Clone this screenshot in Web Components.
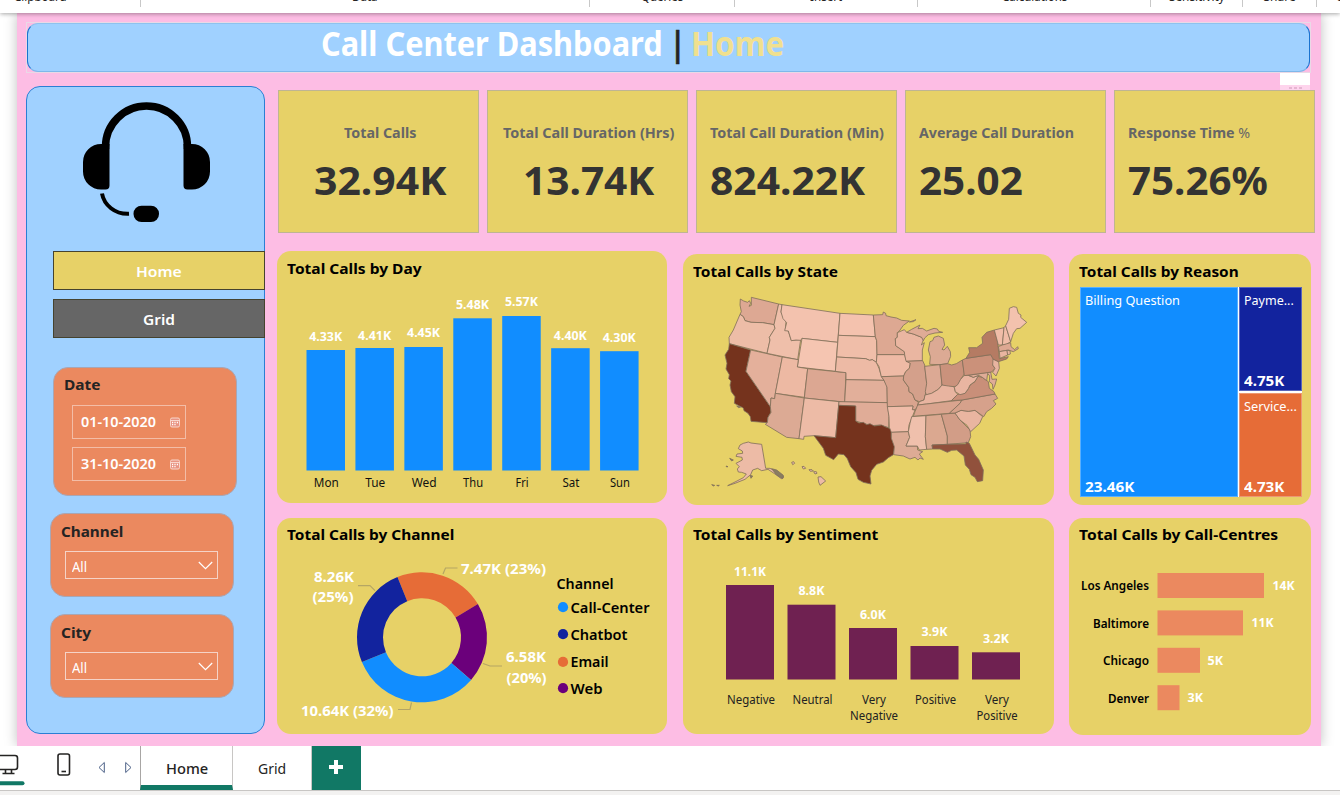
<!DOCTYPE html>
<html lang="en">
<head>
<meta charset="utf-8">
<title>Call Center Dashboard</title>
<style>
html,body{margin:0;height:100%;overflow:hidden;background:#fff;font-family:"Noto Sans","Open Sans",sans-serif}
</style>
</head>
<body>
<report-app></report-app>
<script>
const FONT = 'font-family="Noto Sans, Open Sans, sans-serif"';
const fits = [];

function define(name, html, setup) {
  customElements.define(name, class extends HTMLElement {
    connectedCallback() {
      if (this.shadowRoot) return;
      const root = this.attachShadow({ mode: 'open' });
      root.innerHTML = typeof html === 'function' ? html(this) : html;
      if (setup) setup(this, root);
    }
  });
}

// One line of SVG text set to a given width.
function label(x, y, text, width, size = 12, fill = '#fff', weight = 700, anchor = 'middle') {
  return `<text x="${x}" y="${y}" font-size="${size}" font-weight="${weight}" fill="${fill}" text-anchor="${anchor}" textLength="${width}" lengthAdjust="spacingAndGlyphs">${text}</text>`;
}
const chartStyle = '<style>:host{display:block}svg{display:block;width:100%;height:100%}</style>';

// Text line scaled horizontally to the width in its "w" attribute.
define('fit-text', '<style>:host{display:inline-block;white-space:nowrap;flex:none}span{display:inline-block;transform-origin:0 50%}</style><span><slot></slot></span>', (el, root) => {
  fits.push(() => {
    const w = +el.getAttribute('w'), span = root.querySelector('span');
    span.style.transform = `scaleX(${w / span.offsetWidth})`;
    el.style.width = w + 'px';
  });
});

define('ribbon-group', el => `<style>
:host{display:block;box-sizing:border-box;flex:none;width:${el.getAttribute('width')}px;height:7px;border-right:1px solid #c8c8c8;text-align:center;font-size:12px;line-height:16px;color:#252423}
div{margin-top:-11px}</style><div><slot></slot></div>`);

define('ribbon-bar', `<style>
:host{display:flex;height:13px;overflow:hidden;background:#fff;position:relative;z-index:3;clip-path:inset(0 0 -8px 0);box-shadow:0 1px 4px rgba(0,0,0,.35)}
nav{display:flex;width:1340px;height:13px;overflow:hidden}
ribbon-group:first-child{margin-left:-60px}</style>
<nav>
<ribbon-group width="201"><fit-text w="53">Clipboard</fit-text></ribbon-group>
<ribbon-group width="449"><fit-text w="26">Data</fit-text></ribbon-group>
<ribbon-group width="145"><fit-text w="42">Queries</fit-text></ribbon-group>
<ribbon-group width="183"><fit-text w="32">Insert</fit-text></ribbon-group>
<ribbon-group width="233"><fit-text w="65">Calculations</fit-text></ribbon-group>
<ribbon-group width="92"><fit-text w="56">Sensitivity</fit-text></ribbon-group>
<ribbon-group width="74"><fit-text w="32">Share</fit-text></ribbon-group>
<ribbon-group width="76"><fit-text w="38">Copilot</fit-text></ribbon-group>
</nav>`);

define('report-header', `<style>
:host{display:block;box-sizing:border-box;height:51px;border:1px solid #ead9e6}
div{box-sizing:border-box;height:49px;border:1px solid #1a73cf;border-top-color:#8fc2ee;border-bottom-color:#7fb8ea;border-radius:11px;background:#a0d1ff;display:flex;align-items:center;padding:0 0 10px 292.5px;font-size:33.5px;font-weight:700;line-height:38px;color:#fff}
.bar{color:#252423;margin:0 6px 0 7px;-webkit-text-stroke:.6px #252423}.page{color:#f0e08f}
.more{position:absolute;right:11px;top:60px;width:30px;height:17px;padding:0;display:block;background:rgba(255,255,255,.35);border:0;border-radius:0}
.more i{display:block;height:12px;background:#fff}.more svg{display:block}
</style><div><fit-text w="342">Call Center Dashboard</fit-text><fit-text class="bar" w="15">|</fit-text><fit-text class="page" w="93">Home</fit-text></div>
<div class="more"><i></i><svg width="30" height="5"><path d="M9 3h3M14 3h3M19 3h3" stroke="#e6b5d2" stroke-width="2"/></svg></div>`);

define('kpi-card', el => `<style>
:host{box-sizing:border-box;display:flex;flex-direction:column;align-items:${el.hasAttribute('center') ? 'center' : 'flex-start'};padding:${el.hasAttribute('center') ? '30px 0 0 3px' : '30px 0 0 13px'};height:143px;background:#e7d167;border:1px solid #bfb592}
.l{font-size:14.5px;font-weight:700;line-height:22px;color:#666}.v{font-size:40px;font-weight:700;line-height:50px;margin-top:12px;color:#333}</style>
<fit-text class="l" w="${el.getAttribute('lw')}">${el.getAttribute('label')}</fit-text>
<fit-text class="v" w="${el.getAttribute('vw')}"><slot></slot></fit-text>`);

define('headset-icon', `<style>:host{display:block}svg{display:block}</style>
<svg width="128" height="121" viewBox="83 102 128 121">
<path d="M105.500 149V147a41 41 0 0 1 82 0V149" fill="none" stroke="#000" stroke-width="7.500"/>
<path d="M101 144h8.500v41.500q0 4-4 4h-4.500a18 18 0 0 1-18-18V162a18 18 0 0 1 18-18zM183.500 144h8.500a18 18 0 0 1 18 18v9.500a18 18 0 0 1-18 18h-4.500q-4 0-4-4V144z"/>
<path d="M102 193.500C104 205 115 214.500 129 213.800" fill="none" stroke="#000" stroke-width="4"/>
<rect x="133.500" y="205.700" width="25.500" height="16.300" rx="8"/></svg>`);

define('nav-button', el => `<style>
:host{box-sizing:border-box;display:flex;justify-content:center;align-items:center;height:39px;border:1px solid #45432f;border-top-width:1.5px;background:${el.getAttribute('fill')};color:#fff;font-size:15px;font-weight:600;line-height:20px;padding-top:2px}</style>
<fit-text w="${el.getAttribute('w')}"><slot></slot></fit-text>`);

define('slicer-card', el => `<style>
:host{box-sizing:border-box;display:block;background:#eb895f;border:1px solid #a9a6b4;border-radius:15px;padding:7px 0 0 10px}
header{font-size:15px;font-weight:700;line-height:20px;color:#252423;height:20px}</style>
<header><fit-text w="${el.getAttribute('w')}">${el.getAttribute('title-text')}</fit-text></header><slot></slot>`);

define('date-field', `<style>
:host{box-sizing:border-box;display:flex;align-items:center;justify-content:space-between;width:114px;height:34px;border:1px solid #f3bda7;padding:0 5px 0 8px;color:#fff;font-size:14px;font-weight:600;line-height:20px}
svg{display:block}</style><fit-text w="75"><slot></slot></fit-text>
<svg width="10" height="11" viewBox="0 0 10 11"><rect x=".5" y="1" width="9" height="9" rx="1.500" fill="#e99483" stroke="#f8d5cb"/><path d="M.5 3.500h9" stroke="#f8d5cb"/><path d="M2 5.500h1.200M4.400 5.500h1.200M6.800 5.500h1.200M2 7.700h1.200M4.400 7.700h1.200" stroke="#fff" stroke-width="1.300"/></svg>`);

define('select-field', `<style>
:host{box-sizing:border-box;display:flex;align-items:center;justify-content:space-between;width:153px;height:28px;border:1px solid #f5d3c7;padding:3px 4px 0 6px;color:#fff;font-size:13.500px;line-height:20px}
svg{display:block;margin-top:-2px}</style><fit-text w="15.5"><slot></slot></fit-text>
<svg width="15" height="9" viewBox="0 0 15 9"><path d="M.8 1l6.700 6.700L14.200 1" fill="none" stroke="#fff" stroke-width="1.200"/></svg>`);

define('side-bar', `<style>
:host{box-sizing:border-box;display:flex;flex-direction:column;width:239px;height:648px;background:#a0d1ff;border:1px solid #2a7fd4;border-radius:14px;flex:none}
headset-icon{margin:15px 0 0 56px}
nav{display:flex;flex-direction:column;gap:9px;margin:27.500px -1px 0 26px}
.date{width:184px;height:129px;margin:29.500px 0 0 26px}
.date div{display:flex;flex-direction:column;gap:8px;margin:10px 0 0 8px}
.pick{width:184px;height:84px;margin:17px 0 0 23px}
.pick select-field{margin:10px 0 0 4px}</style>
<headset-icon></headset-icon>
<nav><nav-button fill="#e7d167" w="46">Home</nav-button><nav-button fill="#666" w="32">Grid</nav-button></nav>
<slicer-card class="date" title-text="Date" w="36" style="padding-top:6px"><div style="display:flex;flex-direction:column;gap:8px;margin:11px 0 0 8px"><date-field>01-10-2020</date-field><date-field>31-10-2020</date-field></div></slicer-card>
<slicer-card class="pick" title-text="Channel" w="62"><select-field>All</select-field></slicer-card>
<slicer-card class="pick" title-text="City" w="30"><select-field>All</select-field></slicer-card>`);

define('chart-panel', el => `<style>
:host{box-sizing:border-box;display:flex;flex-direction:column;background:#e7d167;border-radius:14px;overflow:hidden}
header{height:20px;padding:7px 0 0 10px;font-size:14.5px;line-height:20px;font-weight:700;color:#000;flex:none}
fit-text{position:relative;top:${el.getAttribute('lift') || 0}px}</style>
<header><fit-text w="${el.getAttribute('w')}">${el.getAttribute('title-text')}</fit-text></header><slot></slot>`);

define('day-chart', () => {
  const days = [['Mon',350,'4.33K',341,25],['Tue',348,'4.41K',339.5,20],['Wed',347,'4.45K',337,25],['Thu',318.3,'5.48K',309,20],['Fri',316,'5.57K',306.3,13],['Sat',348.2,'4.40K',339.5,17],['Sun',351.2,'4.30K',342,20]];
  return chartStyle + `<svg viewBox="277 278 390 225" ${FONT}>` + days.map((d, i) => {
    const x = 306.5 + i * 48.93;
    return `<rect x="${x}" y="${d[1]}" width="38.500" height="${470.5 - d[1]}" fill="#118dff"/>` + label(x + 19.2, d[3], d[2], 33) + label(x + 19.8, 487, d[0], d[4], 12, '#111', 400);
  }).join('') + '</svg>';
});

define('sentiment-chart', () => {
  const bars = [[585,'11.1K',576,32,['Negative',48]],[604.7,'8.8K',595,26,['Neutral',40]],[628,'6.0K',619,26,['Very',24],['Negative',48]],[646,'3.9K',636,26,['Positive',41]],[652.3,'3.2K',643,26,['Very',24],['Positive',41]]];
  return chartStyle + `<svg viewBox="683 545 371 189" ${FONT}>` + bars.map((b, i) => {
    const x = 726 + i * 61.5;
    return `<rect x="${x}" y="${b[0]}" width="48" height="${679.5 - b[0]}" fill="#6f2151"/>` + label(x + 24, b[2], b[1], b[3]) + b.slice(4).map((n, k) => label(x + 25, 704 + k * 16, n[0], n[1], 12, '#222', 400)).join('');
  }).join('') + '</svg>';
});

define('centre-chart', () => {
  const rows = [['Los Angeles',68,106.5,'14K',1272.5,22],['Baltimore',56,85.5,'11K',1251.5,22],['Chicago',46,42.500,'5K',1207.5,15.500],['Denver',41,22,'3K',1187.5,15.500]];
  return chartStyle + `<svg viewBox="1069 545 242 190" ${FONT}>` + rows.map((r, i) => {
    const y = 573 + i * 37.4;
    return `<rect x="1157.500" y="${y}" width="${r[2]}" height="25" fill="#eb895f"/>` + label(1149, y + 17.3, r[0], r[1], 12, '#000', 600, 'end') + label(r[4], y + 17, r[3], r[5], 12, '#fff', 700, 'start');
  }).join('') + '</svg>';
});

define('channel-donut', () => {
  const cx = 422, cy = 637.3, R = 65, r = 39;
  const arcs = [[-112.2,-30.7,'#e66c37'],[-30.7,41,'#6b007b'],[41,157.6,'#118dff'],[157.6,247.8,'#12239e']];
  const p = (a, q) => { a *= Math.PI / 180; return (cx + q * Math.cos(a)).toFixed(2) + ' ' + (cy + q * Math.sin(a)).toFixed(2); };
  const legend = [['Call-Center',79,'#118dff',612.5],['Chatbot',57,'#12239e',639.5],['Email',38,'#e66c37',667.2],['Web',32,'#6b007b',693.5]];
  return chartStyle + `<svg viewBox="277 545 390 188" preserveAspectRatio="xMidYMin" ${FONT}>` +
    arcs.map(a => `<path d="M${p(a[0], R)}A${R} ${R} 0 0 1 ${p(a[1], R)}L${p(a[1], r)}A${r} ${r} 0 0 0 ${p(a[0], r)}Z" fill="${a[2]}"/>`).join('') +
    '<path d="M443 574l2.500-6h12M358 585.700h12l5 5M483 663.500l7 2.500h12M398 709.500h12l1.500-7" fill="none" stroke="#b5a664" stroke-width="1.200"/>' +
    label(461, 573.7, '7.47K (23%)', 85, 14, '#fff', 700, 'start') +
    label(334, 581.7, '8.26K', 40, 14) + label(333, 602, '(25%)', 41, 14) +
    label(526, 662, '6.58K', 40, 14) + label(526.5, 683, '(20%)', 40, 14) +
    label(301, 715.5, '10.64K (32%)', 92.5, 14, '#fff', 700, 'start') +
    label(556.500, 588.5, 'Channel', 57, 14, '#000', 600, 'start') +
    legend.map(l => `<circle cx="563" cy="${l[3] - 5.3}" r="5.100" fill="${l[2]}"/>` + label(570.5, l[3], l[0], l[1], 14, '#000', 600, 'start')).join('') + '</svg>';
});

define('tree-cell', el => `<style>
:host{box-sizing:border-box;display:flex;flex-direction:column;justify-content:space-between;background:${el.getAttribute('fill')};border:1px solid rgba(255,255,255,.3);color:#fff;padding:1px 0 1px 4px}
.n{font-size:13px;line-height:22px}.v{font-size:14px;font-weight:700;line-height:17px}</style>
<fit-text class="n" w="${el.getAttribute('nw')}">${el.getAttribute('name')}</fit-text><fit-text class="v" w="${el.getAttribute('vw')}"><slot></slot></fit-text>`);

define('reason-treemap', `<style>
:host{box-sizing:border-box;display:grid;grid-template:104px 104px/157.500px 63.500px;gap:1.500px 1px;width:222px;height:209.500px;margin:6px 0 0 11px;background:#fff}
tree-cell:first-of-type{grid-row:1/3}</style>
<tree-cell fill="#118dff" name="Billing Question" nw="95" vw="49">23.46K</tree-cell>
<tree-cell fill="#12239e" name="Payme..." nw="50" vw="40">4.75K</tree-cell>
<tree-cell fill="#e66c37" name="Service..." nw="53" vw="40">4.73K</tree-cell>`);

// State outlines: western list, then eastern list, which is shifted right by 540 units.
define('state-map', () => {
  const west = [
    ['#dda893','181,147 191,153 203,157 208,152 212,160 207,169 214,166 214,142 296,162 282,224 248,218 213,217 195,212 190,200 180,193 184,185 180,165'],
    ['#edbda7','180,193 190,200 195,212 213,217 248,218 282,224 285,235 268,262 270,270 261,310 148,281 147,262 160,240'],
    ['#75331d','148,281 212,300 198,364 271,470 273,487 264,502 262,518 213,514 211,500 204,490 192,482 190,474 163,460 165,440 154,425 150,405 153,393 146,386 148,374 138,357 141,340 135,315 146,298'],
    ['#e4b09b','212,300 307,321 286,430 284,446 273,444 271,470 198,364'],
    ['#efbfaa','296,162 306,164 303,186 318,215 316,240 325,243 334,272 348,270 362,269 353,329 261,310 270,270 268,262 285,235 282,224'],
    ['#f3c2ae','306,164 480,190 473,277 366,265 362,271 348,270 334,272 325,243 314,242 320,218 309,206 303,186'],
    ['#f5c5b1','366,265 473,277 466,364 352,351'],
    ['#edb9a3','307,321 355,329 352,351 383,356 373,442 286,430'],
    ['#dca792','383,356 498,368 494,456 373,444'],
    ['#dcaa94','286,430 373,444 357,566 320,562 256,523 262,518 264,502 273,487 271,470 273,444 284,446'],
    ['#edbba6','373,444 477,455 467,563 402,557 372,559 371,568 357,566'],
    ['#f4c2ae','480,190 580,195 586,260 475,256'],
    ['#f0bea9','475,256 586,260 590,272 591,313 589,337 577,329 569,331 557,326 470,321'],
    ['#edbaa5','470,321 557,326 569,331 577,329 589,337 597,355 604,378 612,391 498,389 498,368 466,364'],
    ['#e2af9a','498,389 612,391 621,407 622,458 494,456'],
    ['#e0ac97','477,455 622,458 627,500 626,533 600,525 575,527 550,520 527,513 527,468 476,466'],
    ['#75331d','476,466 527,468 527,513 537,519 550,517 560,524 570,521 583,528 605,525 615,530 634,537 634,562 644,590 640,614 625,623 610,636 590,643 575,661 570,678 573,702 550,697 534,688 528,668 512,650 502,626 492,614 475,612 461,629 437,616 430,595 402,557 467,563'],
    ['#edbba6','190,580 205,576 213,579 245,583 257,655 270,655 290,665 312,681 304,686 285,672 264,658 245,662 233,655 218,660 212,674 195,688 165,700 143,707 165,696 190,683 199,672 185,667 175,666 172,657 178,650 168,640 187,630 186,622 168,619 171,612 188,610 187,603 175,596 180,585'],
    ['#edbba6','414,681 423,680 437,693 420,706 416,696'],
    ['#edbba6','335,637 341,635 344,640 338,644'],['#edbba6','366,650 372,649 377,655 370,657'],['#edbba6','387,659 396,659 400,663 391,664'],['#edbba6','401,665 409,665 411,670 405,672'],
    ['#8a7d60','149,625 160,630 155,633'],['#8a7d60','170,468 182,471 176,473'],['#8a7d60','95,704 104,706 101,708'],['#8a7d60','110,706 118,706 115,708'],['#8a7d60','138,648 144,650 140,651'],['#8a7d60','275,656 290,660 310,676 308,686 290,675'],['#8a7d60','210,676 218,678 213,685']
  ];
  const east = [
    ['#dda892','40,195 68,194 70,186 77,190 78,197 93,201 110,204 125,211 148,213 130,226 118,243 112,248 112,262 106,266 107,287 133,305 134,314 51,314 50,272 46,260'],
    ['#eebaa5','51,314 134,314 138,330 151,340 148,355 137,365 131,378 64,380 57,350 49,337'],
    ['#d9a48e','64,380 131,378 130,390 146,412 147,425 158,432 165,450 175,456 172,470 165,480 157,479 159,468 82,470 81,412 72,391'],
    ['#efbca8','82,470 159,468 157,479 165,480 155,505 147,525 145,545 94,547 88,532 87,500'],
    ['#ddab95','94,547 145,545 149,562 138,588 172,588 173,600 188,605 178,612 190,628 180,624 174,630 165,622 150,627 130,618 101,614 103,590 94,565'],
    ['#eab6a1','112,248 133,239 140,247 160,252 185,262 190,270 184,285 193,278 187,300 187,332 138,334 134,314 133,305 107,287 106,266 112,262'],
    ['#dfab96','140,247 155,238 180,225 174,236 187,235 200,243 222,235 232,237 236,244 248,247 225,249 205,254 194,264 190,272 185,262 160,252'],
    ['#dcaa94','209,343 211,320 205,300 210,275 218,272 222,262 235,258 250,265 254,285 246,298 252,300 262,289 271,305 272,319 263,341 240,344'],
    ['#d4a08b','138,334 188,332 194,345 200,400 199,420 192,450 178,455 165,450 158,432 147,425 146,412 130,390 131,378 137,365 148,355 151,340'],
    ['#dca994','194,349 240,344 246,405 235,418 215,430 199,435 196,425 200,400'],
    ['#ca927c','240,344 263,341 275,345 289,341 307,330 313,372 302,388 293,408 280,410 260,410 246,405'],
    ['#e8b4a0','192,450 195,435 215,430 235,418 246,405 265,408 282,410 286,425 293,433 274,452 200,462 173,465 178,455'],
    ['#d9a48e','173,465 200,462 306,450 300,460 268,490 160,499 165,485'],
    ['#efc0ac','155,500 198,497 196,560 200,598 178,600 172,588 138,588 149,562 145,545 150,520'],
    ['#dba890','198,497 244,493 262,558 262,583 216,585 218,597 200,598 196,560'],
    ['#d29d87','244,493 285,489 300,510 330,540 332,560 325,578 262,583 262,558'],
    ['#91513c','216,585 262,583 318,582 318,576 328,580 345,615 356,628 370,660 368,692 352,695 345,682 333,674 328,658 316,645 312,618 290,600 275,601 262,607 240,597 218,597'],
    ['#e9b5a0','285,489 303,481 325,484 345,481 368,500 359,520 332,545 321,526 300,510'],
    ['#d6a18b','306,450 405,432 413,445 400,452 408,462 395,475 380,485 371,500 345,481 325,484 303,481 285,489 268,490 300,460'],
    ['#c98f79','274,452 293,433 315,430 325,416 330,405 345,395 353,379 367,382 385,395 388,415 402,425 405,432 306,450'],
    ['#e9b5a1','313,376 325,376 340,382 356,376 345,394 330,405 325,416 315,430 300,434 286,425 283,412 293,404 302,388'],
    ['#e0ac97','325,376 392,366 396,388 410,387 405,405 399,418 397,402 388,395 389,378 383,370 380,392 367,382 356,376 340,382'],
    ['#cb917a','307,330 318,325 392,314 405,330 398,345 405,355 395,366 313,377'],
    ['#e8b4a0','399,327 416,335 418,355 408,378 398,367 405,355 398,345'],
    ['#b57b63','318,325 329,307 326,293 350,293 368,280 366,262 380,247 403,240 413,275 418,326 445,320 440,327 415,335 399,327 392,314'],
    ['#f0bda8','403,240 432,233 430,255 427,285 415,285'],
    ['#f0bda8','432,233 437,227 452,275 440,283 427,285 430,255'],
    ['#f3c2ae','437,227 446,208 448,175 460,170 470,172 475,190 483,195 482,202 500,217 480,235 470,236 460,250 452,275'],
    ['#dda892','415,290 427,285 452,278 453,290 464,299 473,290 475,296 460,305 445,300 418,305'],
    ['#e9b5a0','418,305 441,301 443,315 420,325'],['#e9b5a0','441,301 450,302 451,312 443,315'],
    ['#dfab96','148,216 168,209 160,215']
  ];
  const draw = list => list.map(s => `<polygon fill="${s[0]}" points="${s[1]}"/>`).join('');
  return chartStyle + `<svg viewBox="9 93 1113 672"><g stroke="#806e5b" stroke-width="2.400" stroke-linejoin="round">${draw(west)}<g transform="translate(540 0)">${draw(east)}</g></g></svg>`;
});

define('report-page', `<style>
:host{box-sizing:border-box;position:relative;display:block;width:1304px;height:733px;margin-left:17px;padding:9px 0 0 9px;background:#fdbde4;box-shadow:0 0 12px rgba(0,0,0,.25)}
report-header{width:1285px}
main{display:flex;gap:13px;margin-top:13px}
.kpis{display:grid;grid-template-columns:repeat(5,201px);gap:7.900px;margin-top:4px}
.charts{display:grid;grid-template-columns:390px 371px 242px;column-gap:16px;margin-top:18px}
.charts>div{display:flex;flex-direction:column;gap:13px}
.charts>div:first-child{gap:15px;margin-left:-1px;width:390px}
.charts>div:nth-child(2){margin:3px 0 0 -1px;width:371px}
.charts>div:nth-child(3){margin:3px 0 0 -2px;width:242px}
chart-panel>*{flex:none}
</style>
<report-header></report-header>
<main><side-bar></side-bar><section>
<div class="kpis">
<kpi-card center label="Total Calls" lw="72" vw="132">32.94K</kpi-card>
<kpi-card center label="Total Call Duration (Hrs)" lw="171" vw="131">13.74K</kpi-card>
<kpi-card label="Total Call Duration (Min)" lw="174" vw="155">824.22K</kpi-card>
<kpi-card label="Average Call Duration" lw="155" vw="104">25.02</kpi-card>
<kpi-card label="Response Time <span style='font-weight:400'>%</span>" lw="122" vw="140">75.26%</kpi-card>
</div>
<div class="charts">
<div><chart-panel title-text="Total Calls by Day" w="135"><day-chart style="height:225px"></day-chart></chart-panel>
<chart-panel title-text="Total Calls by Channel" w="167" lift="-1"><channel-donut style="height:189px"></channel-donut></chart-panel></div>
<div><chart-panel title-text="Total Calls by State" w="145"><state-map style="height:224px"></state-map></chart-panel>
<chart-panel title-text="Total Calls by Sentiment" w="185" lift="-1"><sentiment-chart style="height:189px"></sentiment-chart></chart-panel></div>
<div><chart-panel title-text="Total Calls by Reason" w="160" style="height:251px"><reason-treemap></reason-treemap></chart-panel>
<chart-panel title-text="Total Calls by Call-Centres" w="199" lift="-1"><centre-chart style="height:190px"></centre-chart></chart-panel></div>
</div></section></main>`);

define('page-tabs', `<style>
:host{box-sizing:border-box;display:flex;height:45px;background:#fff;border-bottom:1px solid #c8c6c4;position:relative;z-index:2;font-size:15px;line-height:20px;color:#252423}
.tools{display:flex;width:140px;flex:none}.tools svg{display:block}
.tab{box-sizing:border-box;display:flex;justify-content:center;align-items:center;height:44px;border-right:1px solid #c8c6c4}
.home{width:93px;border-left:1px solid #a8a6a4;border-bottom:5px solid #117865;padding-top:5px}.grid{width:79px}
.add{display:flex;box-sizing:border-box;width:49px;height:44px;padding:0 1px 2px 0;background:#117865;justify-content:center;align-items:center}
</style>
<div class="tools"><svg width="140" height="44" viewBox="0 746 140 44" fill="none" stroke="#252423" stroke-width="1.600">
<rect x="-2" y="755.500" width="19.500" height="14" rx="2.500"/><path d="M5.500 770v3M11.500 770v3M2.500 773.500h12"/><path d="M-2 783.200H22.500" stroke="#117865" stroke-width="4" stroke-linecap="round"/>
<rect x="58" y="754" width="11.500" height="21" rx="2"/><path d="M61.500 771.500h4.500"/>
<path d="M104.300 762.500v10l-5.300-5zM125.700 762.500v10l5.300-5z" stroke="#4a5f86" stroke-width="1"/></svg></div>
<div class="tab home"><fit-text w="42" style="font-weight:500">Home</fit-text></div>
<div class="tab grid"><fit-text w="28">Grid</fit-text></div>
<div class="add"><svg width="14" height="14"><path d="M7 0v14M0 7h14" stroke="#fff" stroke-width="4"/></svg></div>`);

define('report-app', `<style>
:host{display:flex;flex-direction:column;width:1340px;height:795px;overflow:hidden;background:#f3f2f1}
.canvas{height:733px;overflow:hidden;background:#fff}</style>
<ribbon-bar></ribbon-bar><div class="canvas"><report-page></report-page></div><page-tabs></page-tabs>`);

fits.forEach(fit => fit());
</script>
</body>
</html>
